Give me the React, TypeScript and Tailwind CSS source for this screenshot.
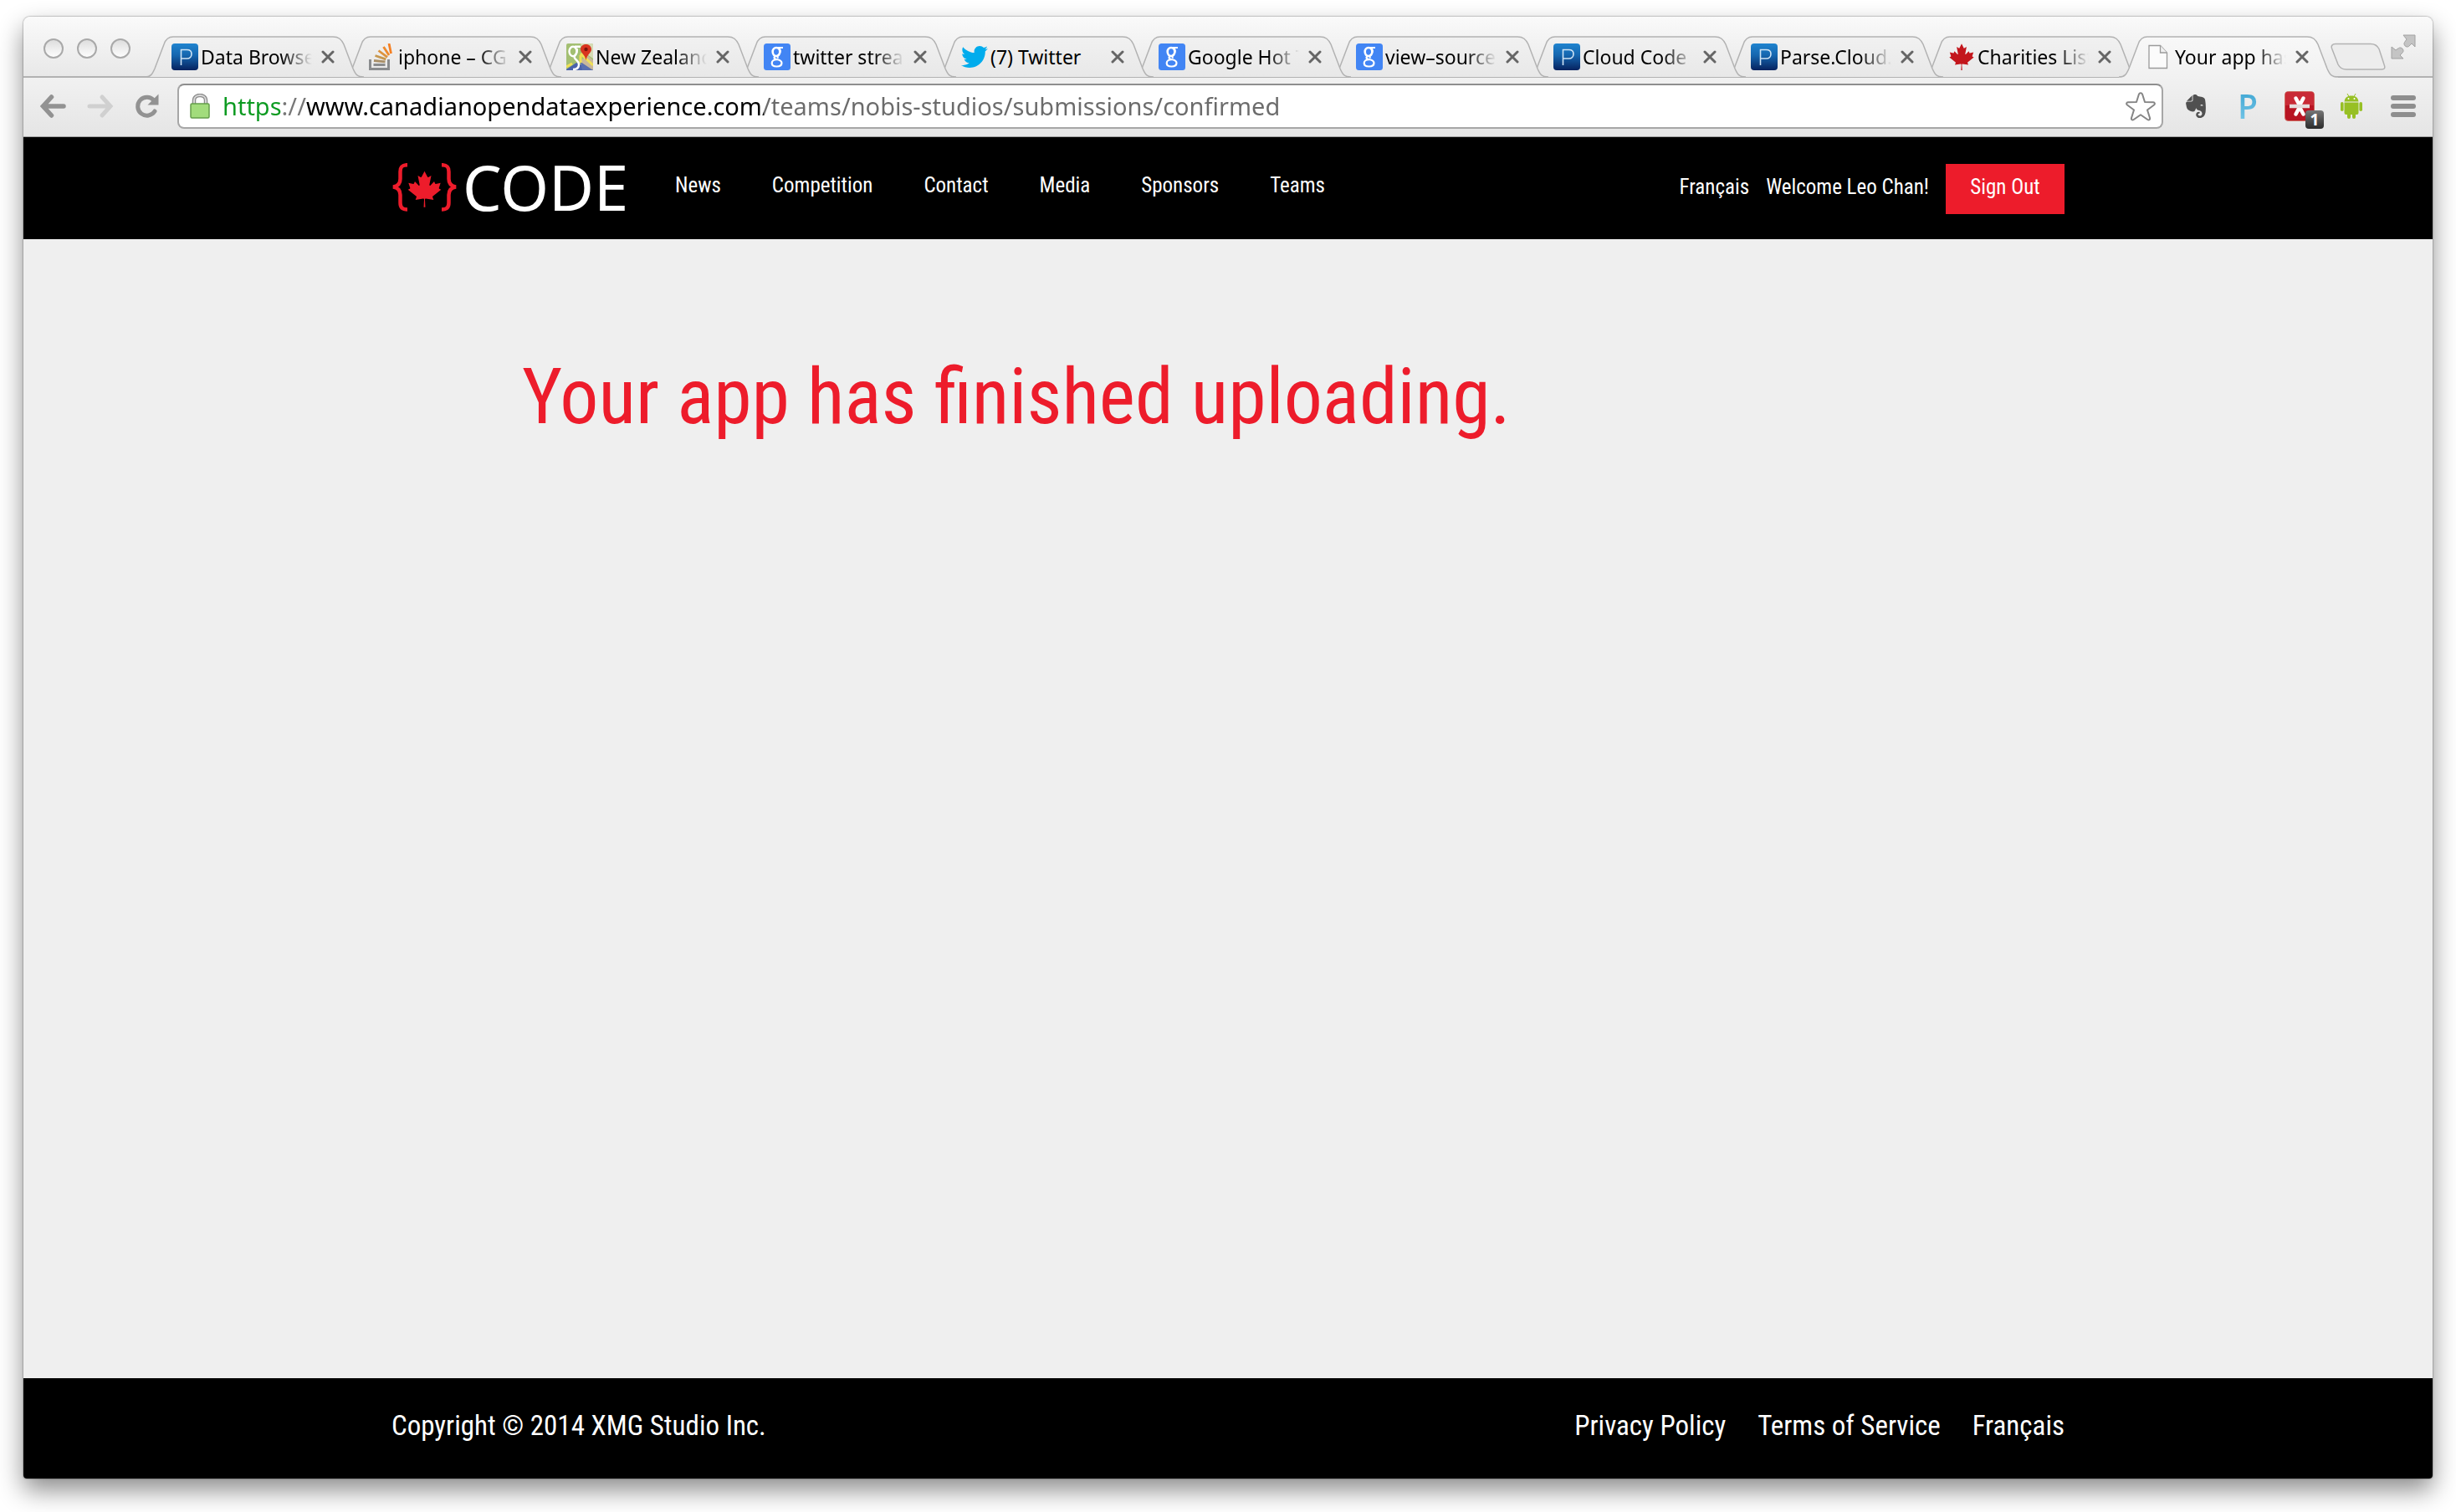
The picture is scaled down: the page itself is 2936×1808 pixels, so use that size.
import { useId } from 'react';
import type { ReactNode } from 'react';
import { SiEvernote } from 'react-icons/si';
import { FaTwitter } from 'react-icons/fa';

const LEAF =
  'm-90 2030 45-863a95 95 0 0 0-111-98l-859 151 116-320a65 65 0 0 0-20-73l-941-762 212-99a65 65 0 0 0 34-79l-186-572 542 115a65 65 0 0 0 73-38l105-247 423 454a65 65 0 0 0 111-57l-204-1052 327 189a65 65 0 0 0 91-27l332-652 332 652a65 65 0 0 0 91 27l327-189-204 1052a65 65 0 0 0 111 57l423-454 105 247a65 65 0 0 0 73 38l542-115-186 572a65 65 0 0 0 34 79l212 99-941 762a65 65 0 0 0-20 73l116 320-859-151a95 95 0 0 0-111 98l45 863z';

function ParseIcon() {
  const id = useId();
  return (
    <svg viewBox="0 0 32 32" className="size-8">
      <defs>
        <linearGradient id={id} x1="0" y1="0" x2="0" y2="1">
          <stop offset="0" stopColor="#1f84cf" />
          <stop offset="0.45" stopColor="#1565ae" />
          <stop offset="1" stopColor="#06225f" />
        </linearGradient>
      </defs>
      <rect width="32" height="32" rx="4" fill={`url(#${id})`} />
      <path d="M11.500 26V7.500h7c3.500 0 5.500 2 5.500 5s-2 5.500-5.500 5.500h-7" fill="none" stroke="#cfe4f5" strokeWidth="1.600" />
    </svg>
  );
}

function GoogleIcon() {
  return (
    <svg viewBox="0 0 32 32" className="size-8">
      <rect width="32" height="32" rx="3.500" fill="#4285f4" />
      <g fill="none" stroke="#fff">
        <ellipse cx="15" cy="10" rx="4.300" ry="5" strokeWidth="2.600" />
        <path d="M15.500 5H23" strokeWidth="1.800" />
        <path d="M19 6c1.500 3 .5 6-1.500 7.500-1.500 1.200-2 2.500 0 4" strokeWidth="1.800" />
        <path d="M14 15c-2.500 1.500-2 3.300 1.500 4 4 .8 6 2 6 4.300 0 2.700-2.500 4.200-6 4.200s-5.800-1.500-5.800-4 2.500-4.300 6-4.300" strokeWidth="2.200" />
      </g>
    </svg>
  );
}

function StackIcon() {
  return (
    <svg viewBox="0 0 32 32" className="size-8" fill="none">
      <path d="M1.500 19v11.500h22V19" stroke="#8a8c8e" strokeWidth="3" />
      <path d="M5.500 25.500h14" stroke="#8a8c8e" strokeWidth="3" />
      <path d="M6 20.500l13.500 1.400" stroke="#a98f67" strokeWidth="2.800" />
      <path d="M7.500 14.500l12.800 4.300" stroke="#c6974f" strokeWidth="2.800" />
      <path d="M11.500 8.500l10.500 7.800" stroke="#dc933d" strokeWidth="2.800" />
      <path d="M17.500 4l6.500 10" stroke="#ee8a2c" strokeWidth="2.800" />
      <path d="M24 0l2.500 12" stroke="#f48024" strokeWidth="2.800" />
    </svg>
  );
}

function MapsIcon() {
  return (
    <svg viewBox="0 0 32 32" className="size-8">
      <rect width="32" height="32" rx="2" fill="#a3bf72" />
      <path d="M17 0h13c1 0 2 1 2 2v16L19 9z" fill="#d5dbb4" />
      <path d="M18 20l7-6 7 6v12H16z" fill="#c9b79a" />
      <path d="M0 31l12-8 20 9H0z" fill="#4a62ab" />
      <path d="M17 22l15 10H19z" fill="#5a6fb0" />
      <path d="M0 28l7-4M17 12l15 14M17 14v9" stroke="#f0df56" strokeWidth="3" />
      <g fill="none" stroke="#fff">
        <ellipse cx="8" cy="9.500" rx="4.500" ry="5.800" strokeWidth="2.400" />
        <path d="M10 3.800h7M12.500 6c2 7-4.500 8-2.500 11.500 1.500 2.500 5 3.500 5 7.500 0 4.500-3.500 6-7 6" strokeWidth="2.400" />
      </g>
      <path d="M23.500 1c4 0 6.500 2.700 6.500 6 0 4-5 5.500-6.500 13-1.500-7.500-6.500-9-6.500-13 0-3.300 2.500-6 6.500-6z" fill="#d9331f" />
      <circle cx="23.500" cy="7" r="2.200" fill="#7a150c" />
    </svg>
  );
}

function LeafIcon() {
  return (
    <svg viewBox="-2015 -2030 4030 4060" className="size-8">
      <path d={LEAF} fill="#c3161c" />
    </svg>
  );
}

function PageIcon() {
  return (
    <svg viewBox="0 0 32 32" className="size-8">
      <path d="M4 2.500h13.500L25.500 11v18.500H4z" fill="#fbfbfb" stroke="#9a9a9a" strokeWidth="1.300" />
      <path d="M17.500 2.500V11h8" fill="#f0f0f0" stroke="#9a9a9a" strokeWidth="1.300" />
    </svg>
  );
}

function TabShape({ active }: { active: boolean }) {
  const id = useId();
  const edge = 'M0 49C7 49 9 46 12 39L23 10C25 4 28 1 34 1H225C232 1 235 4 238 10L249 39C252 46 254 49 262 49';
  return (
    <svg viewBox="0 0 262 50" className="absolute top-0 left-0 h-[50px] w-[262px]">
      <defs>
        <linearGradient id={id} x1="0" y1="0" x2="0" y2="1">
          <stop offset="0" stopColor={active ? '#f8f8f8' : '#f1f1f1'} />
          <stop offset="1" stopColor={active ? '#f1f1f1' : '#e8e8e8'} />
        </linearGradient>
      </defs>
      <path d={active ? `${edge}V50H0z` : edge} fill={`url(#${id})`} />
      <path d={edge} fill="none" stroke="#b2b2b2" strokeWidth="1.500" />
    </svg>
  );
}

const tabs: { title: string; icon: ReactNode }[] = [
  { title: 'Data Browse', icon: <ParseIcon /> },
  { title: 'iphone – CG', icon: <StackIcon /> },
  { title: 'New Zealand', icon: <MapsIcon /> },
  { title: 'twitter strea', icon: <GoogleIcon /> },
  { title: '(7) Twitter', icon: <FaTwitter className="size-8 text-[#00aced]" /> },
  { title: 'Google Hot T', icon: <GoogleIcon /> },
  { title: 'view–source', icon: <GoogleIcon /> },
  { title: 'Cloud Code', icon: <ParseIcon /> },
  { title: 'Parse.Cloud.', icon: <ParseIcon /> },
  { title: 'Charities List', icon: <LeafIcon /> },
  { title: 'Your app has', icon: <PageIcon /> },
];

function Tab({ title, icon, index }: { title: string; icon: ReactNode; index: number }) {
  const active = index === tabs.length - 1;
  const fade = title !== '(7) Twitter';
  return (
    <li className="relative h-[50px] w-[236px] shrink-0" style={{ zIndex: active ? 20 : tabs.length - index }}>
      <TabShape active={active} />
      <div className="relative flex h-[50px] items-center pl-8">
        <button className="flex items-center gap-[3px]">
          {icon}
          <span
            className={
              fade
                ? 'w-[133px] overflow-hidden text-left text-[23px] leading-8 whitespace-nowrap text-black [mask-image:linear-gradient(to_right,#000_72%,transparent)]'
                : 'w-[133px] overflow-hidden text-left text-[23px] leading-8 whitespace-nowrap text-black'
            }
          >
            {title}
          </span>
        </button>
        <button aria-label={`Close ${title}`} className="ml-[11px]">
          <svg viewBox="0 0 16 16" className="size-4">
            <path d="M2 2l12 12M14 2L2 14" stroke="#666" strokeWidth="3" strokeLinecap="round" />
          </svg>
        </button>
      </div>
    </li>
  );
}

function TitleBar() {
  return (
    <div className="flex h-[73px] items-end border-b-2 border-[#b2b2b2] bg-linear-to-b from-[#fafafa] to-[#e8e8e8] pr-5 pl-6">
      <div className="mb-[21px] flex gap-4">
        {['Close', 'Minimize', 'Zoom'].map((name) => (
          <button
            key={name}
            aria-label={name}
            className="size-6 rounded-full border-2 border-[#a9a9a9] bg-linear-to-b from-[#dedede] to-[#fdfdfd]"
          />
        ))}
      </div>
      <ul className="-mb-[2px] ml-[17px] flex">
        {tabs.map((tab, i) => (
          <Tab key={tab.title} {...tab} index={i} />
        ))}
      </ul>
      <button aria-label="New tab" className="mb-[6px] ml-[17px]">
        <svg viewBox="0 0 66 34" className="h-[34px] w-[66px]">
          <path
            d="M6 1.500H48c5 0 8 2 10 6L64 26c2 5 0 6-3 6H19c-5 0-8-2-10-6L2 8C0 4 2 1.500 6 1.500z"
            fill="#ededed"
            stroke="#b2b2b2"
            strokeWidth="1.500"
          />
        </svg>
      </button>
      <button aria-label="Full screen" className="mb-[20px] ml-auto">
        <svg viewBox="0 0 30 30" className="size-[30px]" fill="#c4c4c4" stroke="#a2a2a2" strokeWidth="1">
          <path d="M15 1h14v14l-4-4-3.500 3.500c-3 2-7-2-5-5L19 6z" />
          <path d="M1 15v14h14l-4-4 3.500-3.500c2-3-2-7-5-5L6 19z" />
        </svg>
      </button>
    </div>
  );
}

function Toolbar() {
  return (
    <div className="flex items-center border-b border-[#a0a0a0] bg-linear-to-b from-[#f1f1f1] to-[#e5e5e5] pt-[7px] pr-1 pb-[9px] pl-5">
      <div className="flex gap-6">
        <button aria-label="Back">
          <svg viewBox="0 0 32 32" className="size-8" fill="none" stroke="#929292" strokeWidth="5.500" strokeLinecap="round">
            <path d="M13.500 5L3.500 16l10 11M5 16h23" />
          </svg>
        </button>
        <button aria-label="Forward">
          <svg viewBox="0 0 32 32" className="size-8" fill="none" stroke="#d0d0d0" strokeWidth="5" strokeLinecap="round">
            <path d="M18 5l10 11-10 11M27 16H3" />
          </svg>
        </button>
        <button aria-label="Reload">
          <svg viewBox="0 0 32 32" className="size-8">
            <path d="M25 22a11 11 0 1 1-1-13" fill="none" stroke="#929292" strokeWidth="5" strokeLinecap="round" />
            <path d="M29.500 1.500v13h-13z" fill="#929292" />
          </svg>
        </button>
      </div>
      <div className="ml-5 flex h-[54px] flex-1 items-center rounded-lg border-2 border-[#a6a6a6] border-t-[#8e8e8e] bg-white pr-[7px] pl-[13px]">
        <svg viewBox="0 0 24 30" className="h-[30px] w-6">
          <path d="M5 14V8c0-8 14-8 14 0v6" fill="none" stroke="#8b8b8b" strokeWidth="4.500" />
          <path d="M5 14V8c0-8 14-8 14 0v6" fill="none" stroke="#d8d8d8" strokeWidth="2" />
          <rect x="1" y="12" width="22" height="17" rx="1.500" fill="#a2dc7c" stroke="#649e4a" strokeWidth="1.500" />
        </svg>
        <input
          aria-label="Address"
          defaultValue="https://www.canadianopendataexperience.com/teams/nobis-studios/submissions/confirmed"
          className="ml-[15px] h-10 flex-1 bg-[linear-gradient(to_right,#0b9a20_71px,#777_71px,#777_100px,#000_100px,#000_647px,#6b6b6b_647px)] bg-clip-text text-[29px] leading-10 text-transparent outline-none"
        />
        <button aria-label="Bookmark this page">
          <svg viewBox="0 0 36 36" className="size-9" fill="#fff" stroke="#858585" strokeWidth="2" strokeLinejoin="round">
            <path d="M16 3.500c.7-1.800 3.300-1.800 4 0l3 9.500 10 .3c2 .2 2.500 2 1 3.200l-8 6 3 9.500c.5 2-1 3-2.700 2l-8.300-5.800L9.700 34c-1.700 1-3.200 0-2.700-2l3-9.500-8-6c-1.500-1.200-1-3 1-3.200l10-.3z" />
          </svg>
        </button>
      </div>
      <div className="ml-2 flex">
        <button aria-label="Evernote" className="flex h-[54px] w-[62px] items-center justify-center">
          <SiEvernote className="size-7 text-[#505050]" />
        </button>
        <button
          aria-label="Pandora"
          className="flex h-[54px] w-[62px] items-center justify-center bg-linear-to-b from-[#2e9fce] to-[#7fcdec] bg-clip-text font-[Open_Sans] text-[39px] leading-[54px] font-semibold text-transparent"
        >
          P
        </button>
        <button aria-label="LastPass" className="relative flex h-[54px] w-[62px] items-center justify-center">
          <svg viewBox="0 0 36 36" className="size-9">
            <rect x="0.500" y="0.500" width="35" height="35" rx="4" fill="#b81423" stroke="#cf6a5e" />
            <path d="M1 5c0-3 1-4 4-4h26c3 0 4 1 4 4v12H1z" fill="#c92a36" />
            <path d="M13.500 8.500L17 15h2l3.500-6.500M13.500 27.500L17 21h2l3.500 6.500" fill="none" stroke="#fff" strokeWidth="4.500" strokeLinecap="round" />
            <path d="M6 18h24" stroke="#e6dcdc" strokeWidth="4.500" />
          </svg>
          <span className="absolute right-[2px] bottom-0 size-[22px] rounded-[4px] bg-linear-to-b from-[#777] to-[#2c2c2c] text-center font-[Open_Sans] text-[19px] leading-[22px] font-bold text-white">
            1
          </span>
        </button>
        <button aria-label="Android" className="flex h-[54px] w-[62px] items-center justify-center">
          <svg viewBox="0 0 26 30" className="h-[30px] w-[26px]" fill="#97c024">
            <path d="M4.500 9.500C5 5 8 2.500 13 2.500s8 2.500 8.500 7z" />
            <path d="M8 0l2 3.500M18 0l-2 3.500" stroke="#97c024" strokeWidth="1" />
            <circle cx="9.500" cy="6" r="1" fill="#fff" />
            <circle cx="16.500" cy="6" r="1" fill="#fff" />
            <path d="M4.500 10.500h17V23a2 2 0 0 1-2 2h-1.500v3a2 2 0 0 1-4 0v-3h-2v3a2 2 0 0 1-4 0v-3h-1.500a2 2 0 0 1-2-2z" />
            <rect x="0" y="10" width="3.600" height="11" rx="1.800" />
            <rect x="22.400" y="10" width="3.600" height="11" rx="1.800" />
          </svg>
        </button>
        <button aria-label="Menu" className="flex h-[54px] w-[62px] flex-col items-center justify-center gap-1">
          <span className="h-[6px] w-[30px] rounded-full bg-[#8e8e8e]" />
          <span className="h-[6px] w-[30px] rounded-full bg-[#8e8e8e]" />
          <span className="h-[6px] w-[30px] rounded-full bg-[#8e8e8e]" />
        </button>
      </div>
    </div>
  );
}

function SiteHeader() {
  return (
    <header className="h-[122px] bg-black text-[25px] text-white">
      <div className="mx-auto flex max-w-[2000px] items-start pt-[30px]">
        <a href="#" className="flex w-[339px] shrink-0 items-center gap-[5px]">
          <svg viewBox="0 0 80 58" className="h-[58px] w-20">
            <g fill="none" stroke="#ed1c2b" strokeWidth="4.500">
              <path d="M19 2.200c-6 0-8.500 2-8.500 8V19c0 5-2.500 8.500-8.500 9.500 6 1 8.500 4.500 8.500 9.500v9.500c0 6 2.500 8 8.500 8" />
              <path d="M60 2.200c6 0 8.500 2 8.500 8V19c0 5 2.500 8.500 8.500 9.500-6 1-8.500 4.500-8.500 9.500v9.500c0 6-2.500 8-8.500 8" />
            </g>
            <svg x="18" y="9" width="43" height="44" viewBox="-2015 -2030 4030 4060">
              <path d={LEAF} fill="#ed1c2b" />
            </svg>
          </svg>
          <span className="font-[Noto_Sans] text-[74px] leading-[60px]">CODE</span>
        </a>
        <nav className="flex gap-[61px] leading-[56px]">
          {['News', 'Competition', 'Contact', 'Media', 'Sponsors', 'Teams'].map((item) => (
            <a key={item} href="#">
              {item}
            </a>
          ))}
        </nav>
        <div className="ml-auto flex gap-5 leading-[60px]">
          <a href="#">Français</a>
          <span>Welcome Leo Chan!</span>
          <button className="mt-[2px] h-[60px] w-[142px] bg-[#ed1c2b] pb-1 leading-[56px]">Sign Out</button>
        </div>
      </div>
    </header>
  );
}

function SiteFooter() {
  return (
    <footer className="h-[120px] bg-black text-[33px] leading-[114px] text-white">
      <div className="mx-auto flex max-w-[2000px] justify-between">
        <p>Copyright © 2014 XMG Studio Inc.</p>
        <nav className="flex gap-[38px]">
          <a href="#">Privacy Policy</a>
          <a href="#">Terms of Service</a>
          <a href="#">Français</a>
        </nav>
      </div>
    </footer>
  );
}

export default function App() {
  return (
    <div className="flex min-h-screen flex-col bg-white px-7 pt-5 pb-10">
      <div className="flex flex-1 flex-col overflow-hidden rounded-t-lg rounded-b-[4px] shadow-[0_0_2px_rgba(0,0,0,0.6),0_14px_30px_rgba(0,0,0,0.45)]">
        <div className="font-['Noto_Sans',sans-serif]">
          <TitleBar />
          <Toolbar />
        </div>
        <div className="flex flex-1 flex-col bg-[#efefef] font-['Roboto_Condensed',Roboto,sans-serif]">
          <SiteHeader />
          <main className="mx-auto w-full max-w-[2000px] flex-1 px-[156px] pt-[139px]">
            <h1 className="text-[92px] leading-[100px] text-[#ed1c2b]">Your app has finished uploading.</h1>
          </main>
          <SiteFooter />
        </div>
      </div>
    </div>
  );
}
